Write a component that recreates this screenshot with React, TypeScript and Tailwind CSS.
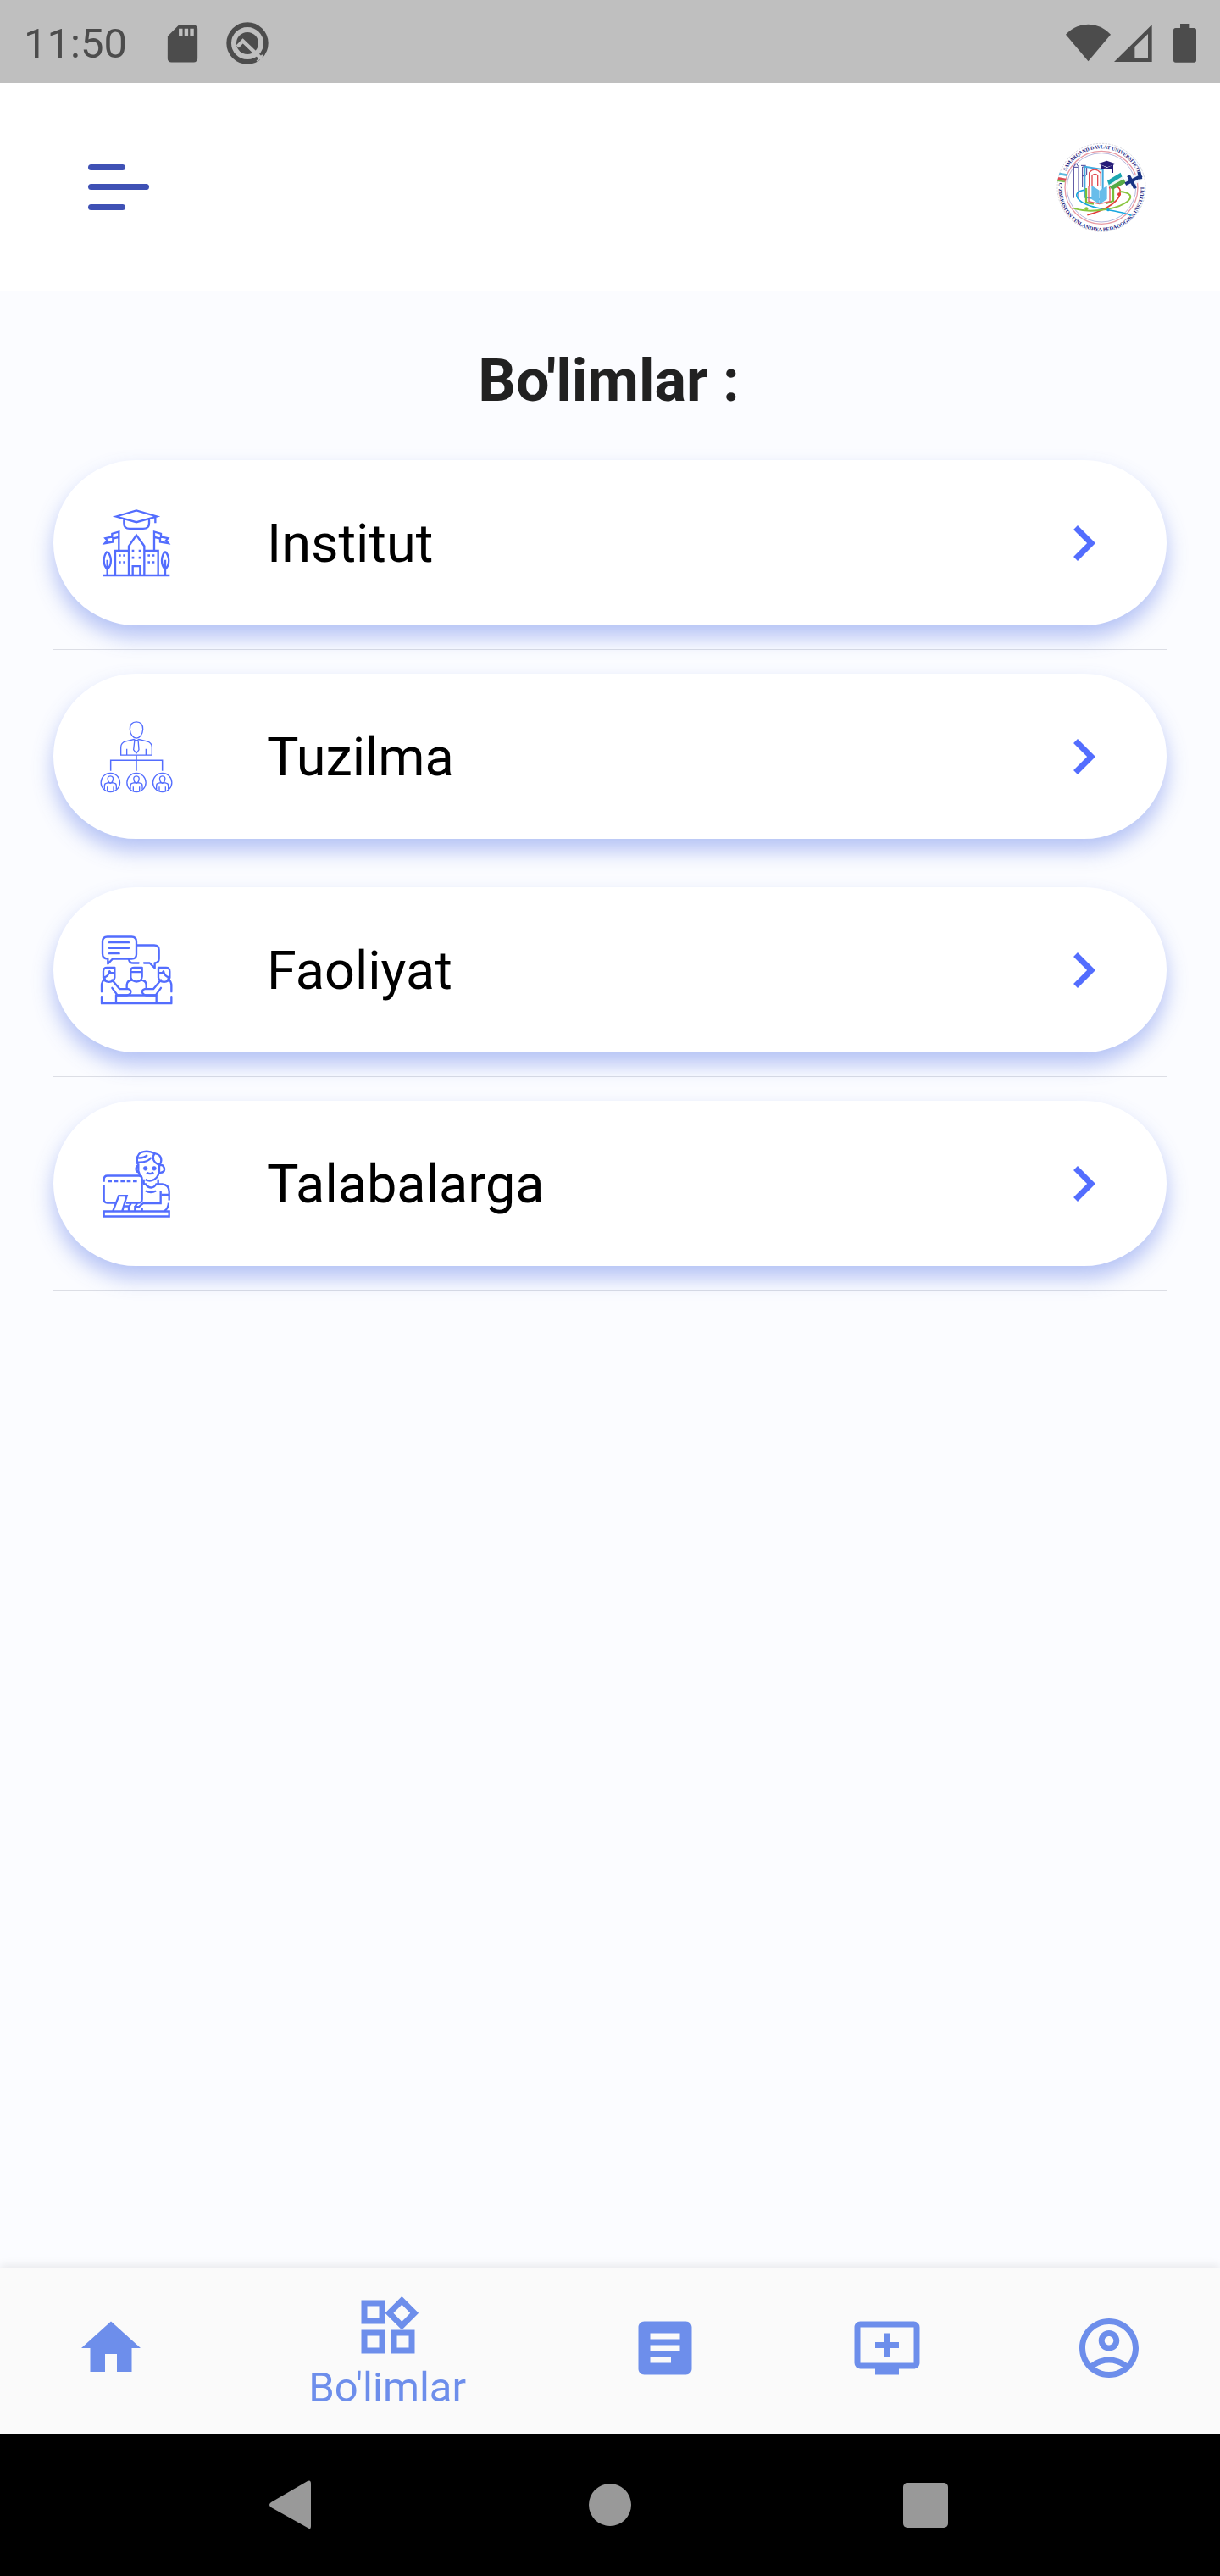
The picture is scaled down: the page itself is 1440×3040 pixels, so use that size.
import type { ReactNode } from "react";
import {
  MdAddToQueue,
  MdArticle,
  MdChevronRight,
  MdHome,
  MdOutlineAccountCircle,
  MdOutlineWidgets,
  MdSdCard,
} from "react-icons/md";

function StatusBar() {
  return (
    <div className="flex h-[98px] shrink-0 items-center bg-[#bfbfbf] pl-[28px] pr-[28px] text-[#4c4c4c]">
      <span className="w-[161px] pt-[5px] text-[49px] leading-[93px]">11:50</span>
      <MdSdCard className="mt-[4px] size-[53px]" />
      <svg className="ml-[24px] mt-[4px] size-[52px]" viewBox="0 0 156 156" fill="none">
        <circle cx="78" cy="78" r="65.500" stroke="currentColor" strokeWidth="17" />
        <circle cx="78" cy="78" r="39" fill="currentColor" />
        <path d="M43 90 62 70 132 137" stroke="#bfbfbf" strokeWidth="13" />
        <path d="m112 142 20-22" stroke="#bfbfbf" strokeWidth="6" />
      </svg>
      <div className="ml-auto flex items-center">
        <svg className="mt-[3px] h-[45px] w-[53px]" viewBox="0 0 159 135" fill="currentColor">
          <path d="M0 38Q34 2 79.500 2T159 38L79.500 133Z" />
        </svg>
        <svg className="ml-[4px] mt-[4px] h-[44px] w-[45px]" viewBox="0 0 135 132" fill="currentColor" fillRule="evenodd">
          <path d="M0 132 134 0V132ZM73 119H120V33L73 79Z" />
        </svg>
        <svg className="ml-[25px] mt-[4px] h-[46px] w-[27px]" viewBox="0 0 81 138" fill="currentColor">
          <path d="M24 0H58V15H73Q81 15 81 23V129Q81 137 73 137H8Q0 137 0 129V23Q0 15 8 15H24Z" />
        </svg>
      </div>
    </div>
  );
}

function UniversityLogo() {
  return (
    <svg className="size-[140px]" viewBox="0 0 420 420" fill="none">
      <defs>
        <path id="ring-top" d="M72 211A138 138 0 0 1 348 211" />
        <path id="ring-bottom" d="M61 190A151 151 0 1 0 359 190" />
      </defs>
      <circle cx="210" cy="211" r="156" stroke="#c4c4ce" strokeWidth="2" strokeDasharray="7 4" />
      <circle cx="210" cy="211" r="129" stroke="#e79aa4" strokeWidth="4" />
      <circle cx="210" cy="211" r="122" stroke="#8f8fc9" strokeWidth="2" />
      <g fill="#1d1a7c" fontFamily="Liberation Serif" fontWeight="700">
        <text fontSize="18" textLength="318" lengthAdjust="spacingAndGlyphs">
          <textPath href="#ring-top" startOffset="60">SAMARQAND DAVLAT UNIVERSITETI</textPath>
        </text>
        <text fontSize="18" textLength="500" lengthAdjust="spacingAndGlyphs">
          <textPath href="#ring-bottom" startOffset="4">O‘ZBEKISTON FINLANDIYA PEDAGOGIKA INSTITUTI</textPath>
        </text>
      </g>
      <path d="m62 158 28 5-3 8-28-5z" fill="#5fb8dd" />
      <path d="m58 174 27 5-3 10-27-5z" fill="#dd4b54" />
      <path d="m56 183 26 5-2 5-26-4z" fill="#7dbd50" />
      <g stroke="#423c94" strokeWidth="3">
        <path d="M112 248V137l8-12 9 12v109M114 139h13M143 210v-72h15v30M138 133h17M142 170h13" />
      </g>
      <path d="m151 137 64 10v107l-64-9z" stroke="#43a9df" strokeWidth="6" />
      <path d="M167 208v-50q20-22 41 2v47M177 204v-36q11-10 20 0v38" stroke="#e04a50" strokeWidth="4" />
      <path d="M156 213v51l27 5M252 211v47l-25 9" stroke="#79bf37" strokeWidth="7" />
      <path d="M165 205v55l38 9 37-9v-59" stroke="#e75b61" strokeWidth="4" />
      <path d="m175 203 28 18v49l-28-18zm55 2-26 16v49l26-18z" fill="#68bdea" />
      <path d="m198 127 31-11 31 11-8 4v28h-3v-27l-18 7z" fill="#251b78" />
      <path d="M209 131v15q19-7 38 2v-15l-17 8z" fill="#251b78" />
      <path d="M148 220C98 228 123 270 207 285S296 302 317 310" stroke="#17a6df" strokeWidth="5" />
      <path d="M160 308C207 296 268 269 276 234S244 205 238 214" stroke="#e23c36" strokeWidth="5" />
      <path d="M112 284C157 301 251 292 292 267S306 227 275 225" stroke="#8ac63f" strokeWidth="6" />
      <circle cx="157" cy="286" r="6" fill="#8ac63f" />
      <circle cx="273" cy="235" r="6" fill="#e23c36" />
      <circle cx="234" cy="290" r="5" fill="#17a6df" />
      <path d="m231 187 47-29 6 17-47 29z" fill="#1ba7b0" />
      <path d="m237 201 47-29 6 14-47 30z" fill="#eef5f5" />
      <path d="m239 208 50-27 8 13-49 25z" fill="#55aa45" />
      <path d="m292 183 50-24 14 24-48 31z" fill="#f2f4fb" />
      <path d="m306 168 24 46M295 199l58-30M343 155l6 26" stroke="#193383" strokeWidth="12" />
    </svg>
  );
}

function InstituteIcon() {
  return (
    <svg className="size-[120px]" viewBox="0 1.5 360 360" fill="none" stroke="#536dfe" strokeWidth="7">
      <path d="M111 87 183 66l72 21-72 20zM139 97v13q0 20 20 20h48q21 0 21-20V97M250 89v21" />
      <path d="M64 295.500h237M108 294V208h47M260 294V208h-47M156 294V192l27-39 28 39v102M170 294v-31h26v31" />
      <path d="M121 207v-66l-24 7v11l-24 5 7 8-9 10 29-5v-12l20-5M246 207v-66l24 7v11l25 5-7 8 8 10-29-5v-12l-20-5" />
      <path d="M80 294v-53M80 211c-16 18-16 46 0 64 17-18 17-46 0-64M285 294v-53M285 211c-16 18-16 46 0 64 17-18 17-46 0-64" />
      <path d="M120 225h8m8 0h8m-24 24h8m8 0h8M223 225h8m8 0h8m-24 24h8m8 0h8M167 209h8m16 0h8m-32 24h8m16 0h8" strokeWidth="8" />
    </svg>
  );
}

function StructureIcon() {
  return (
    <svg className="size-[120px]" viewBox="0 -7.5 360 360" fill="none" stroke="#536dfe" strokeWidth="4">
      <path d="M183 49c-15 0-24 10-23 27 1 18 12 31 23 31s22-13 23-31c1-17-8-27-23-27ZM128 167v-28q0-17 18-21l28-7q9 8 18 0l28 7q18 4 18 21v28zM149 167v-22M217 167v-22M177 111l-4 37 10 12 9-12-3-37" />
      <path d="M92 223v-38h183v38M183 167v56" strokeWidth="4.500" />
      {[91, 183, 275].map((x) => (
        <g key={x} transform={`translate(${x} 264)`}>
          <circle r="33.500" />
          <path d="M0-23c-8 0-11 6-9 13 1 7 5 11 9 11s8-4 9-11c2-7-1-13-9-13ZM-21 24V11q0-8 8-9l8-2q5 5 10 0l8 2q8 1 8 9v13M-11 29V14M11 29V14" />
        </g>
      ))}
    </svg>
  );
}

function ActivityIcon() {
  return (
    <svg className="size-[120px]" viewBox="0 -1.500 360 360" fill="none" stroke="#536dfe" strokeWidth="7" strokeLinecap="round" strokeLinejoin="round">
      <path d="M80 60h86q17 0 17 17v45q0 16-17 16h-67l-17 18v-18q-19 0-19-18V77q0-17 17-17ZM87 80h69M87 100h69M87 119h35" />
      <path d="M184 90h62q17 0 17 17v31q0 13-15 15v18l-18-18h-20M156 140q3 13 15 13h20" />
      <path d="M60 296h246M60 254v-21q0-15 12-24M60 272v24M307 254v-21q0-15-12-24M307 272v24M111 296v-29h143v29" />
      <path d="M66 205v-22q0-14 13-14h27v36q-3 15-20 15t-20-15ZM68 204q17-4 20-22l4 6h13M97 213l27 32h30q10 2 9 11t-14 11h-35M97 241l16 22" />
      <path d="M301 205v-22q0-14-13-14h-27v36q3 15 20 15t20-15ZM299 204q-17-4-20-22l-4 6h-13M270 213l-27 32h-30q-10 2-9 11t14 11h35M270 241l-16 22" />
      <path d="M163 204v-23q0-12 12-12h28v32q-1 17-20 18-16-1-20-15ZM164 185h38M149 243v-13q1-15 19-17M218 243v-13q-1-15-18-17" />
    </svg>
  );
}

function StudentIcon() {
  return (
    <svg className="size-[120px]" viewBox="0 -10.500 360 360" fill="none" stroke="#536dfe" strokeWidth="7">
      <path d="M68 163v-8q0-14 12-14h112q11 0 11 12v71q0 13-14 13h-43M68 174v51q0 12 12 12h29M82 161h14m8 0h14m9 0h14m8 0h14m8 0h14" />
      <path d="M68 267h231v18H68zM100 266l21-54h28l-16 54M141 249h15v17M164 239l-8 13M178 266v-15h14l8-7 7-5h62v-43M186 239l-8 12M203 266v-11" />
      <path d="M187 100q-6-32 11-41 25-10 50 3 23 4 23 24 0 10-6 16-16-4-21-17-5-14 5-24M188 93q34 2 48-17M190 78q20 1 32-10M190 98v26q3 15 12 22M264 102v22q-4 28-27 34-10 3-22-3M190 103q-9 6-8 16t8 9M265 104h10q8 7 7 16t-14 10h-4" />
      <path d="M219 130q12 8 25 0M209 154v15M260 154v15M207 171h9q8 12 19 12t18-12h22q24 3 24 26v31M272 208h26M297 237q-1 20-15 29M216 195q18 10 36 0" />
      <circle cx="215" cy="115" r="7" fill="#536dfe" strokeWidth="2" />
      <circle cx="246" cy="115" r="7" fill="#536dfe" strokeWidth="2" />
    </svg>
  );
}

const sections: { label: string; icon: ReactNode }[] = [
  { label: "Institut", icon: <InstituteIcon /> },
  { label: "Tuzilma", icon: <StructureIcon /> },
  { label: "Faoliyat", icon: <ActivityIcon /> },
  { label: "Talabalarga", icon: <StudentIcon /> },
];

function SectionRow({ label, icon }: { label: string; icon: ReactNode }) {
  return (
    <li className="flex h-[252px] items-center border-b border-[#dcdee5]">
      <button className="flex h-[195px] w-full items-center rounded-full bg-white pl-[37px] pr-[56px] text-left shadow-[0_14px_24px_rgba(83,115,232,0.42)]">
        {icon}
        <span className="ml-[95px] pt-[2px] text-[63px] leading-[74px] text-black">{label}</span>
        <MdChevronRight className="ml-auto size-[84px] text-[#536dfe]" />
      </button>
    </li>
  );
}

function BottomNav() {
  const item = "flex flex-[2] items-center justify-center pb-[6px]";
  return (
    <nav className="flex h-[196px] shrink-0 bg-[#fafafa] text-[#6d8eeb] shadow-[0_-3px_10px_rgba(0,0,0,0.08)]">
      <button className={item}><MdHome className="size-[84px]" /></button>
      <button className="flex flex-[3] flex-col items-center pt-[28px]">
        <MdOutlineWidgets className="size-[84px]" />
        <span className="pr-[2px] pt-[1px] text-[49px] leading-[58px]">Bo'limlar</span>
      </button>
      <button className={item}><MdArticle className="size-[84px]" /></button>
      <button className={item}><MdAddToQueue className="size-[84px]" /></button>
      <button className={item}><MdOutlineAccountCircle className="size-[84px]" /></button>
    </nav>
  );
}

function SystemNav() {
  return (
    <div className="flex h-[168px] shrink-0 items-center justify-center gap-[276px] bg-black">
      <svg className="size-[98px]" viewBox="0 0 98 98" fill="#999">
        <path d="M66 21Q70 19 70 24V74Q70 79 66 76L23 52Q19 49 23 46Z" />
      </svg>
      <div className="flex size-[98px] items-center justify-center">
        <div className="size-[50px] rounded-full bg-[#999]" />
      </div>
      <div className="flex size-[98px] items-center justify-center pr-[3px]">
        <div className="size-[53px] rounded-[5px] bg-[#999]" />
      </div>
    </div>
  );
}

export default function App() {
  return (
    <div className="flex h-[3040px] w-[1440px] flex-col overflow-hidden bg-[#fbfcff] font-['Roboto',sans-serif]">
      <StatusBar />
      <header className="flex h-[245px] shrink-0 items-center justify-between bg-white pl-[104px] pr-[70px]">
        <div className="flex flex-col gap-[16.500px]">
          <div className="h-[7px] w-[44px] rounded-full bg-[#3f51b5]" />
          <div className="h-[7px] w-[72px] rounded-full bg-[#3f51b5]" />
          <div className="h-[7px] w-[44px] rounded-full bg-[#3f51b5]" />
        </div>
        <UniversityLogo />
      </header>
      <main className="flex-1 px-[63px]">
        <h1 className="h-[172px] border-b border-[#dcdee5] pr-[3px] pt-[65px] text-center text-[70px] font-bold leading-[82px] text-[#212121]">
          Bo'limlar :
        </h1>
        <ul>
          {sections.map((section) => (
            <SectionRow key={section.label} {...section} />
          ))}
        </ul>
      </main>
      <BottomNav />
      <SystemNav />
    </div>
  );
}
